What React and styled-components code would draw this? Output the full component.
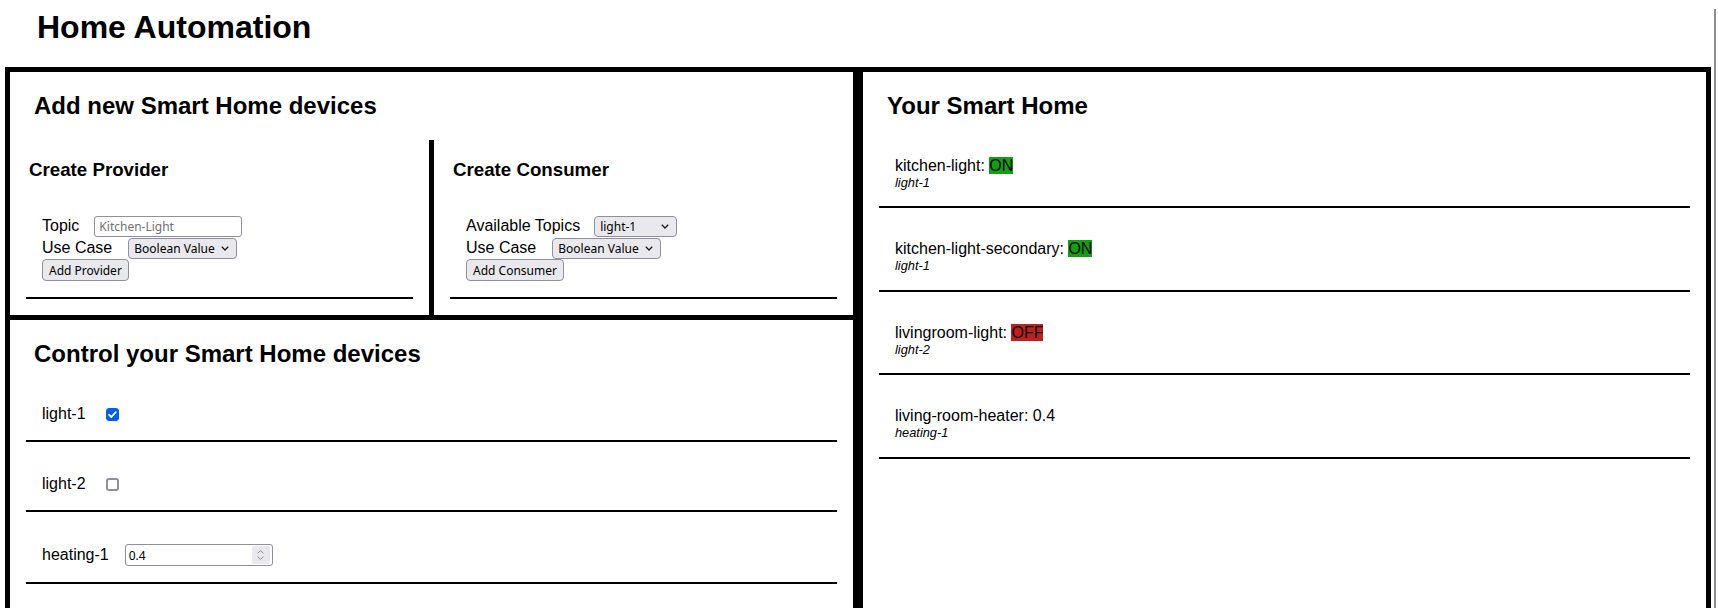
import React, { useState } from 'react';
import styled, { createGlobalStyle } from 'styled-components';

const GlobalStyle = createGlobalStyle`
  html, body { margin: 0; padding: 0; background: #fff; }
  html { scrollbar-width: none; }
  html::-webkit-scrollbar { display: none; }
  body {
    font-family: "Liberation Sans", Arial, Helvetica, sans-serif;
    font-size: 16px;
    color: #000;
  }
`;

const Page = styled.div`
  min-height: 100vh;
  margin-right: 2px;
  border-right: 2px solid #8e8e8e;
`;

const Title = styled.h1`
  font-size: 32px;
  font-weight: bold;
  line-height: normal;
  margin: 9px 0 21px 37px;
`;

const Board = styled.main`
  margin: 0 3px 0 5px;
  border: 5px solid #000;
  display: grid;
  grid-template-columns: 1fr 1fr;
`;

const Column = styled.div`
  min-width: 0;
  border-${(p) => p.$side}: 5px solid #000;
`;

const Section = styled.section`
  border-bottom: ${(p) => (p.$divided ? '5px solid #000' : 'none')};
  padding-bottom: ${(p) => p.$bottom || 0}px;
`;

const SectionTitle = styled.h2`
  font-size: 24px;
  font-weight: bold;
  line-height: normal;
  margin: 0.83em 0 ${(p) => p.$after || 19.92}px 24px;
`;

const SplitRow = styled.div`
  display: flex;
`;

const Pane = styled.div`
  flex: 1 1 0;
  min-width: 0;
  padding: 0 16px;
  border-left: ${(p) => (p.$divider ? '5px solid #000' : 'none')};
`;

const PaneTitle = styled.h3`
  font-size: 18.72px;
  font-weight: bold;
  line-height: normal;
  margin: 18.72px 0 18.72px 3px;
`;

const CardList = styled.div`
  padding: 0 16px;
`;

const Card = styled.div`
  padding: 16px;
  margin: 16px 0;
  border-bottom: 2px solid #000;
`;

const FormLine = styled.div`
  display: flex;
  align-items: center;
  height: 22px;
`;

const FieldLabel = styled.span`
  margin-right: ${(p) => p.$gap ?? 15}px;
  white-space: nowrap;
`;

const controlFont = `
  font-family: "Noto Sans", "Open Sans", sans-serif;
  font-size: 12px;
  color: #000;
`;

const TextInput = styled.input`
  ${controlFont}
  box-sizing: border-box;
  width: 148px;
  height: 21px;
  padding: 0 4px;
  border: 1px solid #8f8f9d;
  border-radius: 3px;
  background: #fff;
  outline: none;
  &::placeholder { color: #707070; }
`;

const SelectWrap = styled.span`
  position: relative;
  display: inline-flex;
`;

const Select = styled.select`
  ${controlFont}
  appearance: none;
  box-sizing: border-box;
  width: ${(p) => p.$w}px;
  height: 21px;
  padding: 0 18px 0 5px;
  border: 1px solid #8f8f9d;
  border-radius: 4px;
  background: #e9e9ed;
  outline: none;
`;

const Chevron = styled.svg`
  position: absolute;
  right: 8px;
  top: 8px;
  pointer-events: none;
`;

const Button = styled.button`
  ${controlFont}
  box-sizing: border-box;
  height: 22px;
  padding: 0 6px;
  border: 1px solid #8f8f9d;
  border-radius: 4px;
  background: #e9e9ed;
  cursor: pointer;
`;

const DeviceLine = styled.div`
  display: flex;
  align-items: center;
  height: ${(p) => p.$h}px;
`;

const CheckWrap = styled.span`
  position: relative;
  display: inline-flex;
  margin: 3px 3px 3px 4px;
`;

const CheckBox = styled.input`
  appearance: none;
  box-sizing: border-box;
  width: 13px;
  height: 13px;
  margin: 0;
  border: ${(p) => (p.checked ? '1px solid #0060df' : '2px solid #8f8f9d')};
  border-radius: 3px;
  background: ${(p) => (p.checked ? '#0060df' : '#fff')};
  cursor: pointer;
`;

const CheckMark = styled.svg`
  position: absolute;
  left: 0;
  top: 0;
  pointer-events: none;
`;

const NumberBox = styled.span`
  box-sizing: border-box;
  display: inline-flex;
  align-items: center;
  width: 148px;
  height: 22px;
  border: 1px solid #8f8f9d;
  border-radius: 3px;
  background: #fff;
`;

const NumberInput = styled.input`
  ${controlFont}
  flex: 1;
  min-width: 0;
  height: 100%;
  border: none;
  padding: 0 3px;
  outline: none;
  background: transparent;
`;

const Spinner = styled.span`
  display: flex;
  flex-direction: column;
  align-items: center;
  justify-content: center;
  gap: 2px;
  width: 18px;
  height: 18px;
  margin-right: 2px;
  background: #e9e9ed;
  border-radius: 2px;
`;

const DeviceName = styled.div`
  line-height: normal;
`;

const Status = styled.span`
  background: ${(p) => p.$bg || 'transparent'};
`;

const Topic = styled.small`
  display: block;
  font-size: 12.8px;
  font-style: italic;
  line-height: 15.5px;
`;

const ChevronDown = () => (
  <Chevron width="8" height="5" viewBox="0 0 8 5">
    <path d="M0.8 0.8 L4 4 L7.2 0.8" fill="none" stroke="#1a1a1a" strokeWidth="1.3" />
  </Chevron>
);

const Dropdown = ({ w, options }) => (
  <SelectWrap>
    <Select $w={w} defaultValue={options[0]}>
      {options.map((o) => (
        <option key={o}>{o}</option>
      ))}
    </Select>
    <ChevronDown />
  </SelectWrap>
);

const Checkbox = ({ checked, onChange }) => (
  <CheckWrap>
    <CheckBox type="checkbox" checked={checked} onChange={onChange} />
    {checked && (
      <CheckMark width="13" height="13" viewBox="0 0 13 13">
        <path d="M3.2 6.8 L5.4 9 L9.8 4.2" fill="none" stroke="#fff" strokeWidth="1.8" strokeLinecap="round" strokeLinejoin="round" />
      </CheckMark>
    )}
  </CheckWrap>
);

const NumberField = ({ value, onChange }) => (
  <NumberBox>
    <NumberInput type="text" inputMode="decimal" value={value} onChange={onChange} />
    <Spinner>
      <svg width="7" height="4" viewBox="0 0 7 4">
        <path d="M0.6 3.4 L3.5 0.6 L6.4 3.4" fill="none" stroke="#8a8a8a" strokeWidth="1" />
      </svg>
      <svg width="7" height="4" viewBox="0 0 7 4">
        <path d="M0.6 0.6 L3.5 3.4 L6.4 0.6" fill="none" stroke="#8a8a8a" strokeWidth="1" />
      </svg>
    </Spinner>
  </NumberBox>
);

const devices = [
  { name: 'kitchen-light', value: 'ON', bg: '#12a012', topic: 'light-1' },
  { name: 'kitchen-light-secondary', value: 'ON', bg: '#12a012', topic: 'light-1' },
  { name: 'livingroom-light', value: 'OFF', bg: '#c01f22', topic: 'light-2' },
  { name: 'living-room-heater', value: '0.4', bg: null, topic: 'heating-1' },
];

export default function App() {
  const [light1, setLight1] = useState(true);
  const [light2, setLight2] = useState(false);
  const [heat, setHeat] = useState('0.4');

  return (
    <>
      <GlobalStyle />
      <Page>
        <Title>Home Automation</Title>
        <Board>
          <Column $side="right">
            <Section $divided>
              <SectionTitle>Add new Smart Home devices</SectionTitle>
              <SplitRow>
                <Pane>
                  <PaneTitle>Create Provider</PaneTitle>
                  <Card>
                    <FormLine>
                      <FieldLabel $gap={15}>Topic</FieldLabel>
                      <TextInput placeholder="Kitchen-Light" />
                    </FormLine>
                    <FormLine>
                      <FieldLabel $gap={16}>Use Case</FieldLabel>
                      <Dropdown w={109} options={['Boolean Value', 'Number Value']} />
                    </FormLine>
                    <FormLine>
                      <Button>Add Provider</Button>
                    </FormLine>
                  </Card>
                </Pane>
                <Pane $divider>
                  <PaneTitle>Create Consumer</PaneTitle>
                  <Card>
                    <FormLine>
                      <FieldLabel $gap={14}>Available Topics</FieldLabel>
                      <Dropdown w={83} options={['light-1', 'light-2', 'heating-1']} />
                    </FormLine>
                    <FormLine>
                      <FieldLabel $gap={16}>Use Case</FieldLabel>
                      <Dropdown w={109} options={['Boolean Value', 'Number Value']} />
                    </FormLine>
                    <FormLine>
                      <Button>Add Consumer</Button>
                    </FormLine>
                  </Card>
                </Pane>
              </SplitRow>
            </Section>
            <Section $bottom={40}>
              <SectionTitle>Control your Smart Home devices</SectionTitle>
              <CardList>
                <Card>
                  <DeviceLine $h={20}>
                    <FieldLabel $gap={16}>light-1</FieldLabel>
                    <Checkbox checked={light1} onChange={() => setLight1(!light1)} />
                  </DeviceLine>
                </Card>
                <Card>
                  <DeviceLine $h={20}>
                    <FieldLabel $gap={16}>light-2</FieldLabel>
                    <Checkbox checked={light2} onChange={() => setLight2(!light2)} />
                  </DeviceLine>
                </Card>
                <Card>
                  <DeviceLine $h={22}>
                    <FieldLabel $gap={16}>heating-1</FieldLabel>
                    <NumberField value={heat} onChange={(e) => setHeat(e.target.value)} />
                  </DeviceLine>
                </Card>
              </CardList>
            </Section>
          </Column>
          <Column $side="left">
            <Section>
              <SectionTitle $after={21}>Your Smart Home</SectionTitle>
              <CardList>
                {devices.map((d) => (
                  <Card key={d.name}>
                    <DeviceName>
                      {d.name}: <Status $bg={d.bg}>{d.value}</Status>
                    </DeviceName>
                    <Topic>{d.topic}</Topic>
                  </Card>
                ))}
              </CardList>
            </Section>
          </Column>
        </Board>
      </Page>
    </>
  );
}
